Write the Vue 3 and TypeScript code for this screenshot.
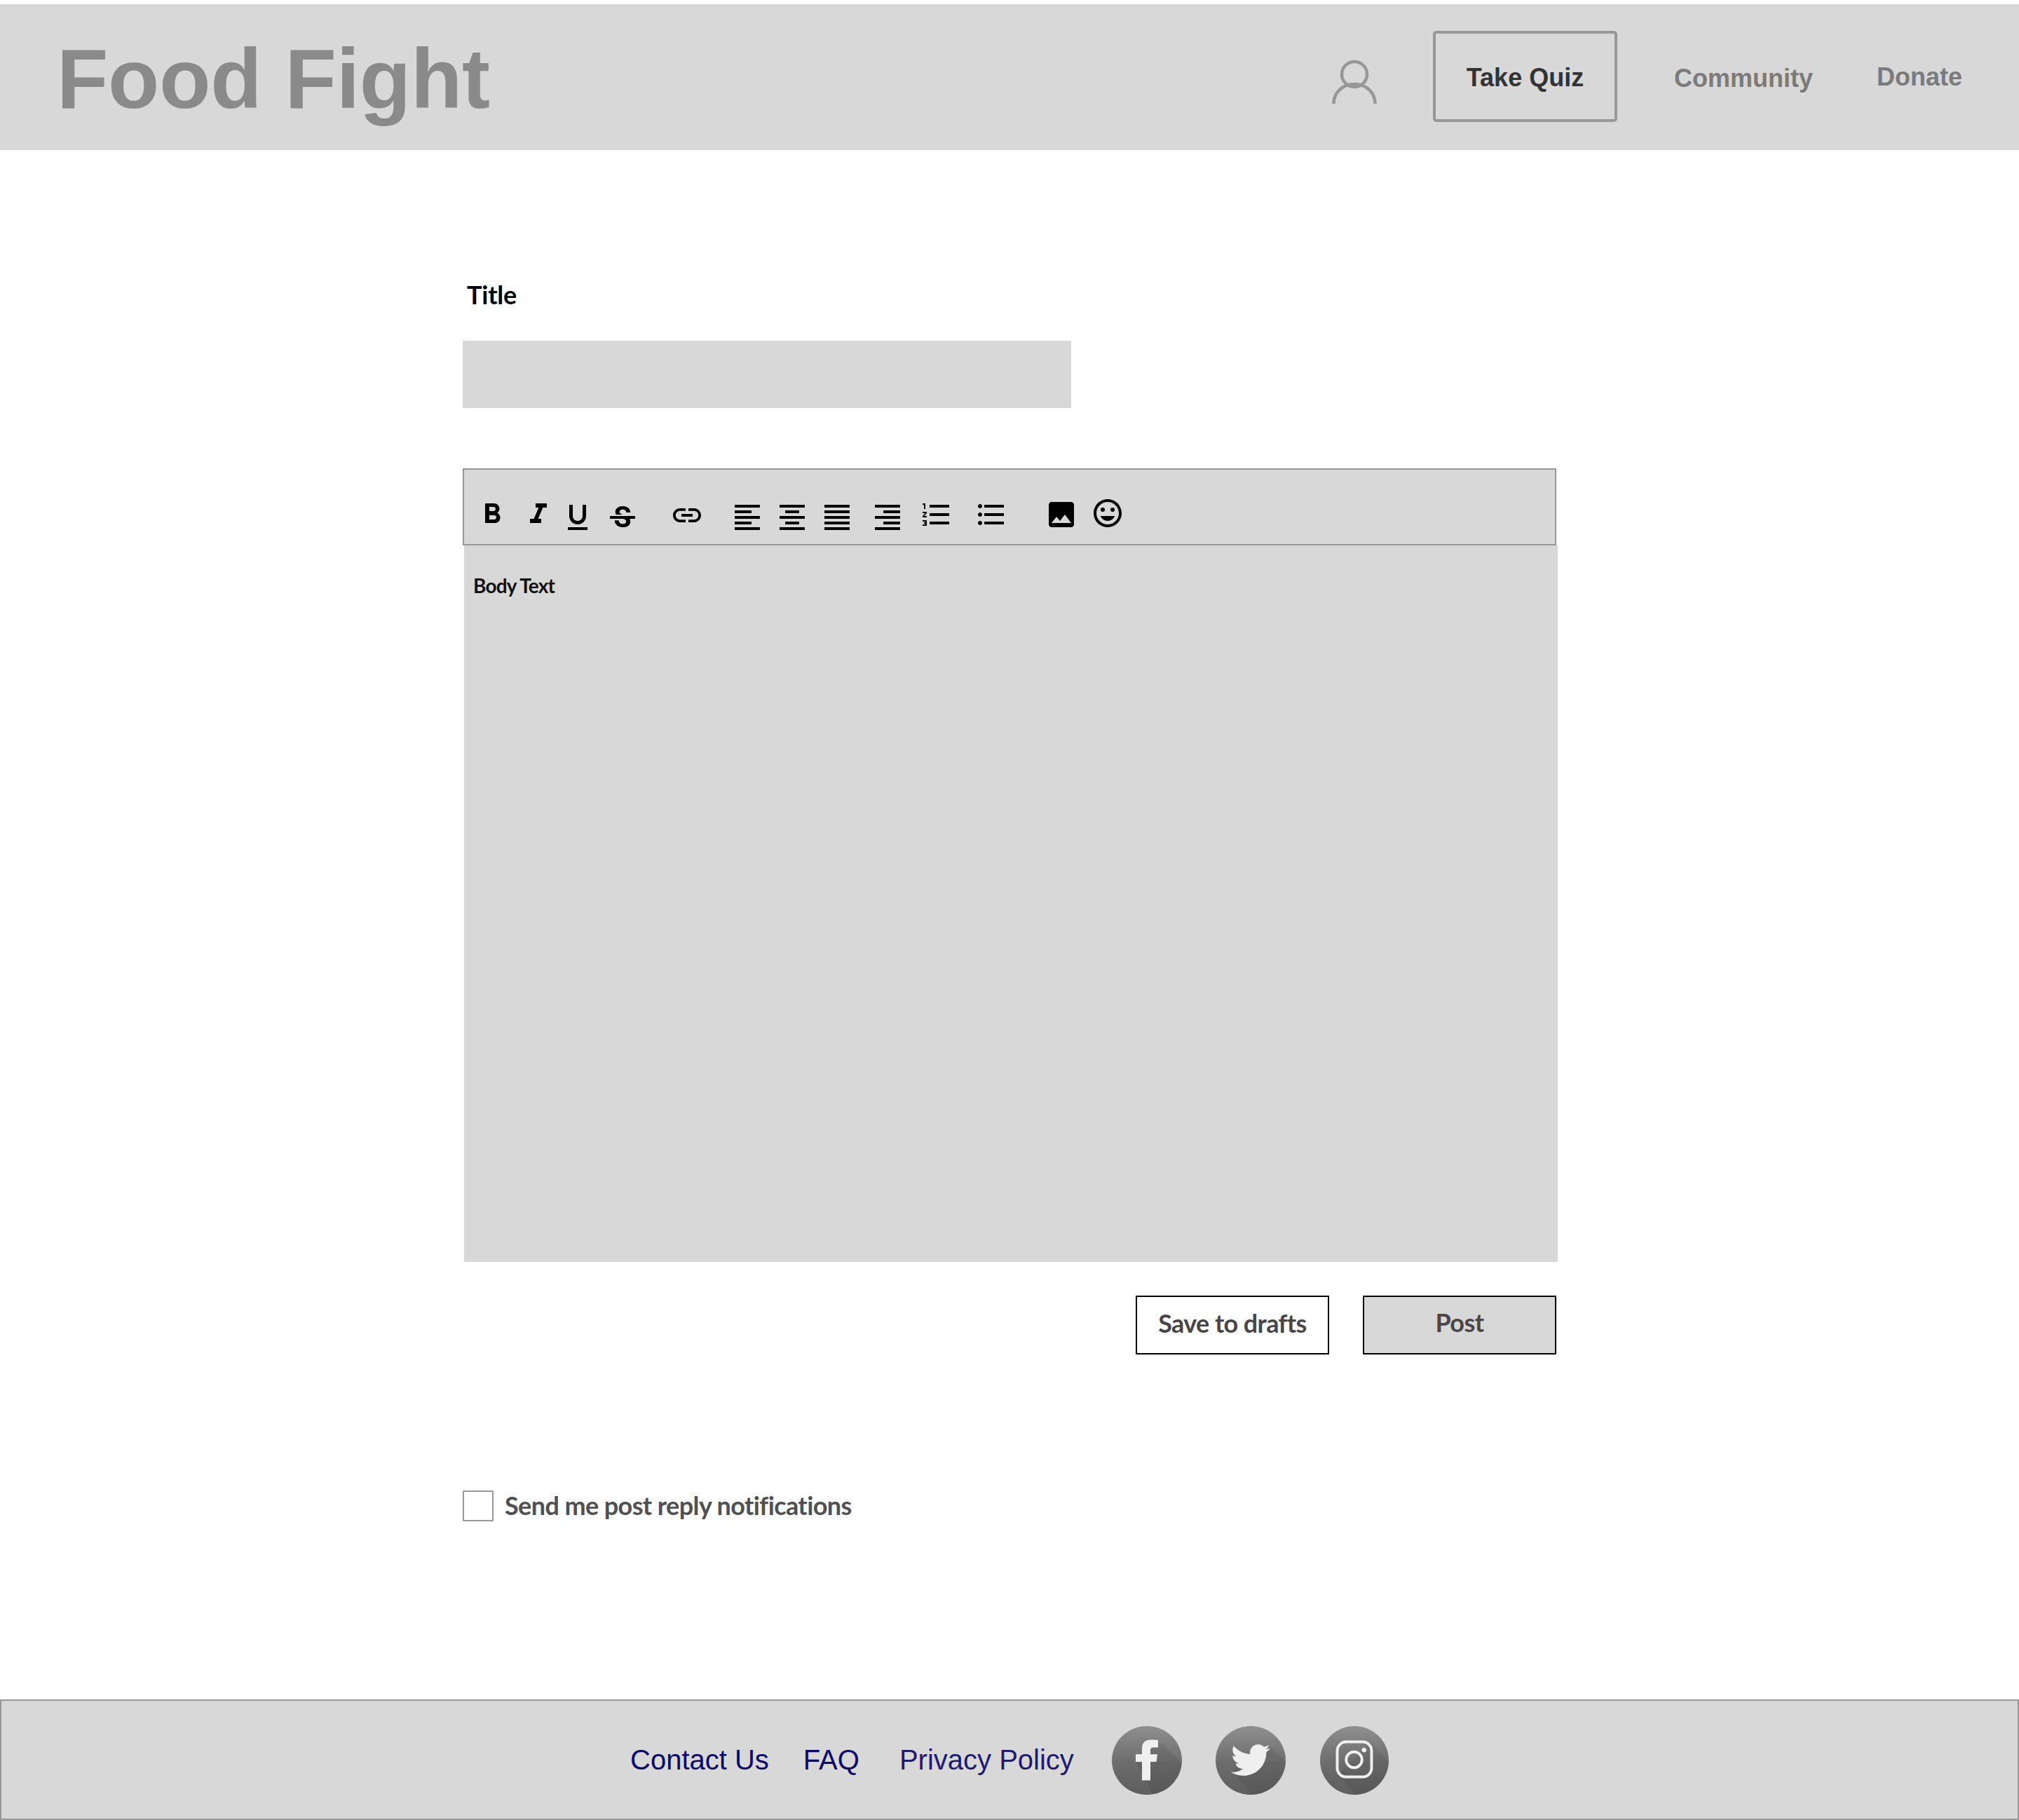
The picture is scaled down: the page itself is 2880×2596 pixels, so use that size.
<template>
  <div class="page">
    <header class="top-bar">
      <h1 class="brand">Food Fight</h1>
      <nav class="top-nav">
        <svg class="user-icon" viewBox="0 0 64 62" fill="none">
          <ellipse cx="32" cy="20" rx="18" ry="18" />
          <path d="M2.500 62C2.500 46 15 34 32 34C49 34 61.500 46 61.500 62" />
        </svg>
        <a class="quiz-btn">Take Quiz</a>
        <a class="nav-link community">Community</a>
        <a class="nav-link donate">Donate</a>
      </nav>
    </header>

    <main class="content">
      <label class="title-label">Title</label>
      <div class="title-input"></div>

      <section class="editor">
        <div class="toolbar">
          <svg
            v-for="tool in tools"
            :key="tool.name"
            class="tool"
            :class="`tool-${tool.name}`"
            viewBox="0 0 24 24"
          >
            <path :d="tool.d" />
            <template v-if="tool.name === 'smile'">
              <circle cx="15.500" cy="9.500" r="1.500" />
              <circle cx="8.500" cy="9.500" r="1.500" />
            </template>
          </svg>
        </div>
        <div class="editor-body">Body Text</div>
      </section>

      <div class="actions">
        <button class="btn btn-drafts">Save to drafts</button>
        <button class="btn btn-post">Post</button>
      </div>

      <label class="notify">
        <span class="checkbox"></span>
        <span>Send me post reply notifications</span>
      </label>
    </main>

    <footer class="bottom-bar">
      <a class="foot-link contact">Contact Us</a>
      <a class="foot-link faq">FAQ</a>
      <a class="foot-link privacy">Privacy Policy</a>

      <svg class="social social-fb" viewBox="0 0 100 100" preserveAspectRatio="none">
        <defs>
          <linearGradient id="disc" x1="0" y1="0" x2="0" y2="1">
            <stop offset="0" stop-color="#8f8f8f" />
            <stop offset="0.55" stop-color="#6c6c6c" />
            <stop offset="1" stop-color="#5e5e5e" />
          </linearGradient>
          <clipPath id="round"><circle cx="50" cy="50" r="50" /></clipPath>
        </defs>
        <circle cx="50" cy="50" r="50" fill="url(#disc)" />
        <polygon class="long-shadow" clip-path="url(#round)" points="66,20 110,64 110,110 64,110 34,52" />
        <path class="glyph" d="M43 79V52H34V41H43V33C43 24 48 20 56 20C60 20 63 20.300 66 20.600V31H60C56 31 55 33 55 35V41H65L63.500 52H55V79Z" />
      </svg>
      <svg class="social social-tw" viewBox="0 0 100 100" preserveAspectRatio="none">
        <circle cx="50" cy="50" r="50" fill="url(#disc)" />
        <polygon class="long-shadow" clip-path="url(#round)" points="76,28 110,62 110,110 60,110 24,66" />
        <path
          class="glyph"
          transform="translate(22 21.500) scale(2.330)"
          d="M23.953 4.570a10 10 0 01-2.825.775 4.958 4.958 0 002.163-2.723c-.951.555-2.005.959-3.127 1.184a4.920 4.920 0 00-8.384 4.482C7.690 8.095 4.067 6.130 1.640 3.162a4.822 4.822 0 00-.666 2.475c0 1.710.870 3.213 2.188 4.096a4.904 4.904 0 01-2.228-.616v.060a4.923 4.923 0 003.946 4.827 4.996 4.996 0 01-2.212.085 4.936 4.936 0 004.604 3.417 9.867 9.867 0 01-6.102 2.105c-.390 0-.779-.023-1.170-.067a13.995 13.995 0 007.557 2.209c9.053 0 13.998-7.496 13.998-13.985 0-.210 0-.420-.015-.630A9.935 9.935 0 0024 4.590z"
        />
      </svg>
      <svg class="social social-ig" viewBox="0 0 100 100">
        <circle cx="50" cy="50" r="50" fill="url(#disc)" />
        <polygon class="long-shadow" clip-path="url(#round)" points="72,24 110,62 110,110 62,110 26,72" />
        <rect class="glyph-line" x="25" y="23" width="50" height="51" rx="13" />
        <circle class="glyph-line" cx="49.500" cy="49" r="11.500" />
        <circle class="glyph" cx="64" cy="35" r="3.300" />
      </svg>
    </footer>
  </div>
</template>

<script setup lang="ts">
interface Tool {
  name: string
  d: string
}

const alignLeft = 'M15 15H3v2h12v-2zm0-8H3v2h12V7zM3 13h18v-2H3v2zm0 8h18v-2H3v2zM3 3v2h18V3H3z'
const alignCenter = 'M7 15v2h10v-2H7zm-4 6h18v-2H3v2zm0-8h18v-2H3v2zm4-6v2h10V7H7zM3 3v2h18V3H3z'
const alignJustify = 'M3 21h18v-2H3v2zm0-4h18v-2H3v2zm0-4h18v-2H3v2zm0-4h18V7H3v2zm0-6v2h18V3H3z'
const alignRight = 'M3 21h18v-2H3v2zm6-4h12v-2H9v2zm-6-4h18v-2H3v2zm6-4h12V7H9v2zM3 3v2h18V3H3z'

const tools: Tool[] = [
  { name: 'bold', d: 'M15.600 10.790c.970-.670 1.650-1.770 1.650-2.790 0-2.260-1.750-4-4-4H7v14h7.040c2.090 0 3.710-1.700 3.710-3.790 0-1.520-.860-2.820-2.150-3.420zM10 6.500h3c.830 0 1.500.670 1.500 1.500s-.670 1.500-1.500 1.500h-3v-3zm3.500 9H10v-3h3.500c.830 0 1.500.670 1.500 1.500s-.670 1.500-1.500 1.500z' },
  { name: 'italic', d: 'M10 4v3h2.210l-3.420 8H6v3h8v-3h-2.210l3.420-8H18V4z' },
  { name: 'underline', d: 'M12 17c3.310 0 6-2.690 6-6V3h-2.500v8c0 1.930-1.570 3.500-3.500 3.500S8.500 12.930 8.500 11V3H6v8c0 3.310 2.690 6 6 6zm-7 2v2h14v-2H5z' },
  { name: 'strike', d: 'M7.240 8.750c-.260-.480-.390-1.030-.390-1.670 0-.610.130-1.160.400-1.670.260-.500.630-.930 1.110-1.290.480-.350 1.050-.630 1.700-.830.660-.190 1.390-.290 2.180-.290.810 0 1.540.110 2.210.340.660.220 1.230.540 1.690.940.470.400.830.880 1.080 1.430.250.550.380 1.150.380 1.810h-3.010c0-.310-.050-.590-.150-.850-.090-.270-.240-.490-.440-.680-.200-.190-.450-.330-.750-.440-.300-.100-.660-.160-1.060-.160-.390 0-.740.040-1.030.130-.290.090-.530.210-.720.360-.190.160-.340.340-.440.550-.100.210-.150.430-.150.660 0 .480.250.880.740 1.210.380.250.770.480 1.410.700H7.390c-.050-.080-.110-.170-.150-.250zM21 12v-2H3v2h9.620c.180.070.400.140.550.200.370.170.660.340.870.510.210.170.350.360.430.570.070.200.110.430.110.690 0 .230-.050.450-.140.660-.090.200-.230.380-.420.530-.190.150-.420.260-.710.350-.290.080-.630.130-1.010.130-.430 0-.830-.040-1.180-.130s-.660-.230-.910-.420c-.250-.190-.450-.440-.590-.750-.140-.310-.250-.760-.250-1.210H6.400c0 .550.080 1.130.240 1.580.160.450.37.850.650 1.210.280.350.600.660.980.920.370.260.780.480 1.220.650.440.170.900.300 1.380.390.480.080.960.130 1.440.130.800 0 1.530-.090 2.180-.280s1.210-.450 1.670-.790c.460-.340.820-.770 1.070-1.270s.380-1.070.380-1.710c0-.600-.100-1.140-.310-1.610-.050-.110-.110-.230-.170-.330H21z' },
  { name: 'link', d: 'M3.900 12c0-1.710 1.390-3.100 3.100-3.100h4V7H7c-2.760 0-5 2.240-5 5s2.240 5 5 5h4v-1.900H7c-1.710 0-3.100-1.390-3.100-3.100zM8 13h8v-2H8v2zm9-6h-4v1.900h4c1.710 0 3.100 1.390 3.100 3.100s-1.390 3.100-3.100 3.100h-4V17h4c2.760 0 5-2.240 5-5s-2.240-5-5-5z' },
  { name: 'left', d: alignLeft },
  { name: 'center', d: alignCenter },
  { name: 'justify', d: alignJustify },
  { name: 'right', d: alignRight },
  { name: 'numbered', d: 'M2 17h2v.500H3v1h1v.500H2v1h3v-4H2zm1-9h1V4H2v1h1v3zm-1 3h1.800L2 13.100v.900h3v-1H3.200L5 10.900V10H2v1zm5-6v2h14V5H7zm0 14h14v-2H7v2zm0-6h14v-2H7v2z' },
  { name: 'bulleted', d: 'M4 10.500c-.830 0-1.500.670-1.500 1.500s.670 1.500 1.500 1.500 1.500-.670 1.500-1.500-.670-1.500-1.500-1.500zm0-6c-.830 0-1.500.670-1.500 1.500S3.170 7.500 4 7.500 5.500 6.830 5.500 6 4.830 4.500 4 4.500zm0 12c-.830 0-1.500.680-1.500 1.500s.680 1.500 1.500 1.500 1.500-.680 1.500-1.500-.670-1.500-1.500-1.500zM7 19h14v-2H7v2zm0-6h14v-2H7v2zm0-8v2h14V5H7z' },
  { name: 'image', d: 'M21 19V5c0-1.100-.900-2-2-2H5c-1.100 0-2 .900-2 2v14c0 1.100.900 2 2 2h14c1.100 0 2-.900 2-2zM8.500 13.500l2.500 3.010L14.500 12l4.500 6H5l3.500-4.500z' },
  { name: 'smile', d: 'M11.990 2C6.470 2 2 6.480 2 12s4.470 10 9.990 10C17.520 22 22 17.520 22 12S17.520 2 11.990 2zM12 20c-4.420 0-8-3.580-8-8s3.580-8 8-8 8 3.580 8 8-3.580 8-8 8zM12 17.500c2.330 0 4.310-1.460 5.110-3.500H6.890c.800 2.040 2.780 3.500 5.110 3.500z' }
]
</script>

<style>
html,
body {
  margin: 0;
  background: #fff;
}
</style>

<style scoped>
.page {
  width: 2880px;
  height: 2596px;
  display: flex;
  flex-direction: column;
  padding-top: 6px;
  box-sizing: border-box;
  font-family: Lato, "Noto Sans", sans-serif;
  overflow: hidden;
}

.top-bar {
  height: 208px;
  flex-shrink: 0;
  background: #d8d8d8;
  display: flex;
  align-items: flex-start;
  justify-content: space-between;
  font-family: "Liberation Sans", Arial, sans-serif;
}

.brand {
  margin: 37px 0 0 81px;
  font-size: 120px;
  line-height: 138px;
  font-weight: 700;
  letter-spacing: -0.2px;
  color: #8a8a8a;
}

.top-nav {
  display: flex;
  align-items: flex-start;
  padding-right: 81px;
}

.user-icon {
  width: 64px;
  height: 62px;
  margin-top: 80px;
  overflow: visible;
  stroke: #979797;
  stroke-width: 4.500px;
}

.quiz-btn {
  width: 263px;
  height: 130px;
  margin: 38px 0 0 80px;
  box-sizing: border-box;
  border: 4px solid #979797;
  border-radius: 5px;
  display: flex;
  justify-content: center;
  align-items: center;
  padding-top: 4px;
  font-size: 36px;
  font-weight: 700;
  color: #333;
}

.nav-link {
  font-size: 36px;
  line-height: 42px;
  font-weight: 700;
  color: #7b7b7b;
}

.community {
  margin: 85px 0 0 81px;
}

.donate {
  margin: 83px 0 0 91px;
}

.content {
  display: flex;
  flex-direction: column;
  align-items: flex-start;
  padding-left: 660px;
  flex: 1;
}

.title-label {
  margin: 184px 0 0 6px;
  font-size: 36px;
  line-height: 44px;
  font-weight: 700;
  letter-spacing: -0.2px;
  color: #000;
}

.title-input {
  width: 868px;
  height: 96px;
  margin-top: 44px;
  background: #d8d8d8;
}

.editor {
  width: 1562px;
  margin-top: 86px;
}

.toolbar {
  width: 1560px;
  height: 110px;
  box-sizing: border-box;
  border: 2px solid #979797;
  background: #d8d8d8;
  display: flex;
  align-items: flex-start;
  padding: 40px 0 0 16px;
}

.tool {
  width: 48px;
  height: 48px;
  flex-shrink: 0;
  fill: #000;
}

.tool-italic { margin-left: 18px; }
.tool-underline { margin: 4px 0 0 8px; }
.tool-strike { margin: 6px 0 0 16px; }
.tool-link { margin: 1px 0 0 44px; }
.tool-left { margin: 4px 0 0 38px; }
.tool-center { margin: 4px 0 0 16px; }
.tool-justify { margin: 4px 0 0 16px; }
.tool-right { margin: 4px 0 0 24px; }
.tool-numbered { margin-left: 22px; }
.tool-bulleted { margin-left: 30px; }
.tool-image { margin-left: 52px; }
.tool-smile { margin: -2px 0 0 18px; }

.editor-body {
  height: 1022px;
  margin-left: 2px;
  background: #d8d8d8;
  box-sizing: border-box;
  padding: 38px 0 0 13px;
  font-size: 28px;
  line-height: 38px;
  font-weight: 700;
  letter-spacing: -0.8px;
  color: #111;
}

.actions {
  width: 1560px;
  margin-top: 48px;
  display: flex;
  justify-content: flex-end;
  gap: 48px;
}

.btn {
  width: 276px;
  height: 84px;
  box-sizing: border-box;
  border: 2px solid #000;
  padding: 0 0 6px;
  font-family: inherit;
  font-size: 36px;
  font-weight: 700;
  letter-spacing: -0.6px;
  color: #4a4546;
  background: #fff;
}

.btn-post {
  background: #d8d8d8;
  padding-bottom: 9px;
}

.notify {
  display: flex;
  align-items: center;
  gap: 16px;
  margin-top: 194px;
  font-size: 36px;
  line-height: 44px;
  font-weight: 700;
  letter-spacing: -0.6px;
  color: #505050;
}

.notify span:last-child {
  margin-top: -2px;
}

.checkbox {
  width: 44px;
  height: 44px;
  box-sizing: border-box;
  border: 2px solid #979797;
}

.bottom-bar {
  height: 172px;
  flex-shrink: 0;
  box-sizing: border-box;
  border: 2px solid #979797;
  background: #d8d8d8;
  display: flex;
  align-items: center;
  padding-left: 897px;
  font-family: "Liberation Sans", Arial, sans-serif;
}

.foot-link {
  font-size: 40px;
  line-height: 46px;
  color: #0c0668;
}

.faq {
  margin-left: 49px;
}

.privacy {
  margin-left: 57px;
  color: #1e1a70;
}

.social {
  width: 100px;
  height: 98px;
  margin-top: 1px;
  flex-shrink: 0;
}

.social-fb { margin-left: 54px; }
.social-tw { margin-left: 48px; }
.social-ig { margin-left: 48px; }

.long-shadow {
  fill: #000;
  opacity: 0.07;
}

.glyph {
  fill: #efefef;
}

.glyph-line {
  fill: none;
  stroke: #efefef;
  stroke-width: 4;
}
</style>
